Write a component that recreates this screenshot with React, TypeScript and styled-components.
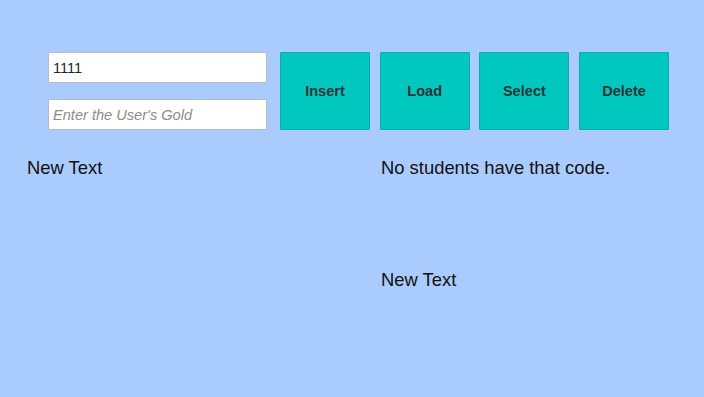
import React from 'react';
import styled, { createGlobalStyle } from 'styled-components';

const GlobalStyle = createGlobalStyle`
  html, body {
    margin: 0;
    padding: 0;
    background: #aacbfe;
  }
  body {
    font-family: "Liberation Sans", Arial, sans-serif;
  }
`;

const Screen = styled.div`
  width: 704px;
  height: 397px;
  background: #aacbfe;
  overflow: hidden;
  box-sizing: border-box;
  padding-top: 52px;
`;

const Toolbar = styled.div`
  display: flex;
  align-items: flex-start;
  gap: 13px;
  margin-left: 48px;
`;

const InputStack = styled.div`
  display: flex;
  flex-direction: column;
  gap: 16px;
  width: 219px;
`;

const Field = styled.input`
  box-sizing: border-box;
  height: 31px;
  width: 100%;
  margin: 0;
  padding: 0 4px;
  border: 1px solid #b4bcc8;
  border-radius: 1px;
  background: #ffffff;
  font-family: "Liberation Sans", Arial, sans-serif;
  font-size: 14.6px;
  color: #222222;
  outline: none;

  &::placeholder {
    color: #8c8c8c;
    font-style: italic;
  }
`;

const ButtonRow = styled.div`
  display: flex;
  gap: 9.7px;
`;

const ActionButton = styled.button`
  box-sizing: border-box;
  width: 90px;
  height: 78px;
  margin: 0;
  padding: 0;
  border: 1px solid #12aaa6;
  border-radius: 1px;
  background: #00c8bf;
  font-family: "Liberation Sans", Arial, sans-serif;
  font-size: 14.6px;
  font-weight: bold;
  color: #2e3434;
  cursor: pointer;
`;

const Messages = styled.div`
  display: grid;
  grid-template-columns: 354px 1fr;
  grid-template-rows: 112px auto;
  margin-top: 27px;
  padding-left: 27px;
`;

const Label = styled.div<{ $col: number; $row: number }>`
  grid-column: ${(p) => p.$col};
  grid-row: ${(p) => p.$row};
  font-size: 18.4px;
  line-height: 21px;
  color: #111111;
  white-space: nowrap;
`;

export default function App() {
  return (
    <>
      <GlobalStyle />
      <Screen>
        <Toolbar>
          <InputStack>
            <Field defaultValue="1111" />
            <Field placeholder="Enter the User's Gold" />
          </InputStack>
          <ButtonRow>
            <ActionButton>Insert</ActionButton>
            <ActionButton>Load</ActionButton>
            <ActionButton>Select</ActionButton>
            <ActionButton>Delete</ActionButton>
          </ButtonRow>
        </Toolbar>
        <Messages>
          <Label $col={1} $row={1}>New Text</Label>
          <Label $col={2} $row={1}>No students have that code.</Label>
          <Label $col={2} $row={2}>New Text</Label>
        </Messages>
      </Screen>
    </>
  );
}
